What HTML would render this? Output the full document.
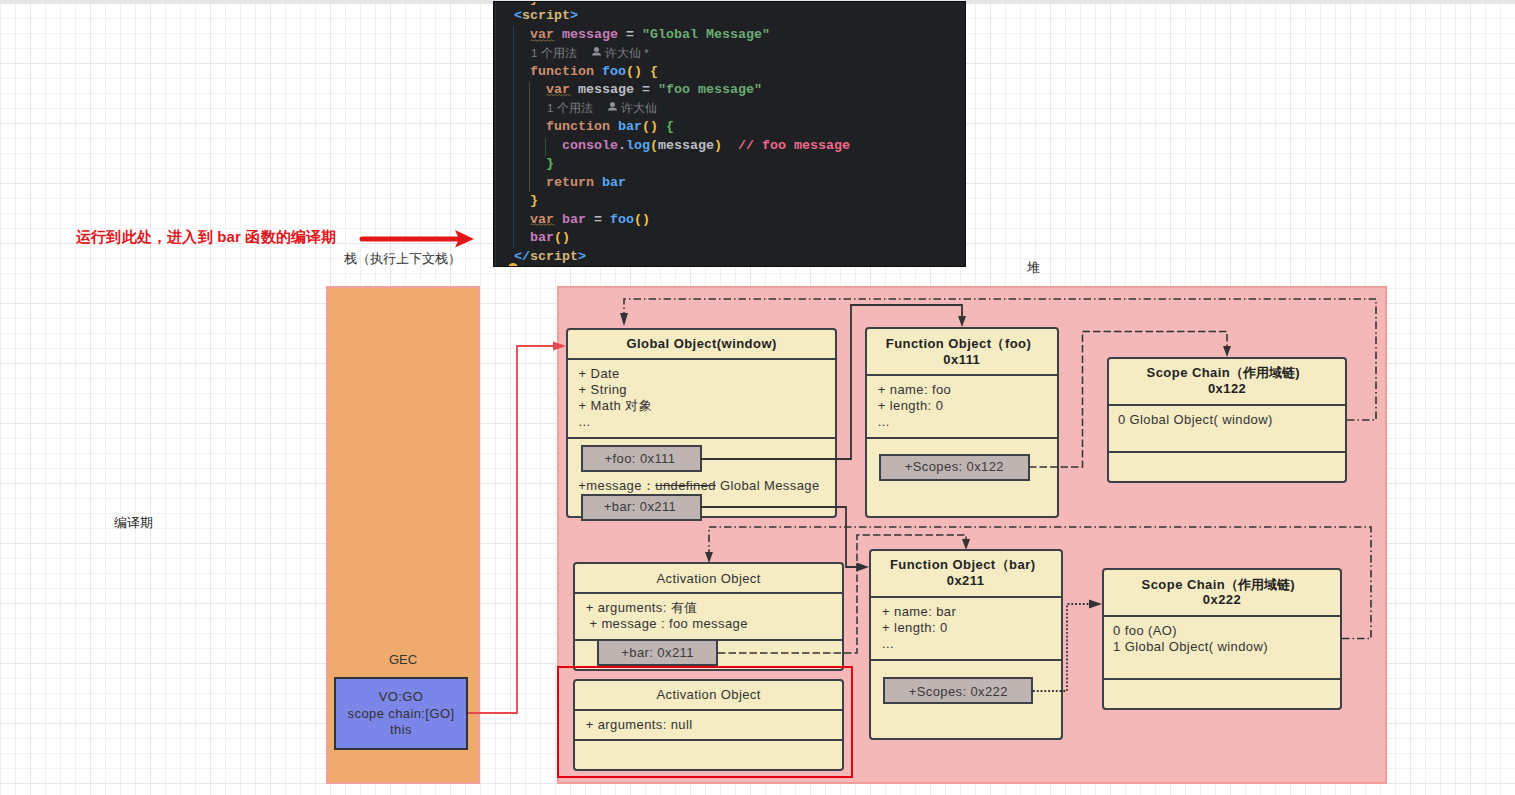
<!DOCTYPE html>
<html><head><meta charset="utf-8">
<style>
html,body{margin:0;padding:0;}
body{width:1515px;height:795px;overflow:hidden;position:relative;background:#fff;font-family:"Liberation Sans",sans-serif;color:#333;}
#grid{position:absolute;left:0;top:0;width:1515px;height:795px;
background-image:
linear-gradient(to right,#e6e6e6 1px,transparent 1px),
linear-gradient(to bottom,#e6e6e6 1px,transparent 1px),
linear-gradient(to right,#f1f1f1 1px,transparent 1px),
linear-gradient(to bottom,#f1f1f1 1px,transparent 1px);
background-size:60px 795px,1515px 60px,15px 795px,1515px 15px;
background-position:30px 0,0 63px,0 0,0 3px;}
#topband{position:absolute;left:0;top:0;width:1515px;height:3px;background:#e4e6e9;}
.abs{position:absolute;}
.t{position:absolute;white-space:nowrap;font-size:13px;line-height:16px;letter-spacing:0.4px;color:#333;}
.t.c{width:400px;text-align:center;}
.t.b{font-weight:bold;letter-spacing:0.45px;color:#222;}
.t.g{color:#3a3a3a;}
.box{position:absolute;box-sizing:border-box;background:#f6ecc4;border:2px solid #3d4046;border-radius:4px;}
.sep{position:absolute;height:2px;background:#3d4046;}
.gbox{position:absolute;box-sizing:border-box;background:#beb4b2;border:2px solid #3d4046;}
#code{position:absolute;left:493px;top:1px;width:473px;height:266px;background:#1f2023;box-sizing:border-box;border:1px solid #0c0d0f;overflow:hidden;font-family:"Liberation Mono",monospace;font-weight:bold;font-size:13.33px;}
#code .l{position:absolute;white-space:pre;line-height:18px;}
#code .m{position:absolute;white-space:pre;font-family:"Liberation Sans",sans-serif;font-weight:normal;font-size:11.5px;color:#7c8089;line-height:14px;}
.kw{color:#cf8e6d}.pu{color:#c77dbb}.bl{color:#56a8f5}.gr{color:#6aab73}.wh{color:#bcbec4}.ye{color:#f0c44c}.gn{color:#5fb85f}.tg{color:#d5b778}.cm{color:#f06a8a}
.sq{text-decoration:underline wavy #8d7440;text-decoration-thickness:1px;text-underline-offset:3px;}
</style></head><body>
<div id="grid"></div>
<div id="topband"></div>

<div id="code">
 <div class="abs" style="left:1px;top:0;width:1px;height:266px;background:#2b2d30"></div>
 <div class="abs" style="left:19px;top:24px;width:1px;height:222px;background:#23425a"></div>
 <div class="abs" style="left:35px;top:80px;width:1px;height:110px;background:#5a4d28"></div>
 <div class="abs" style="left:51px;top:136px;width:1px;height:18px;background:#2f5a2f"></div>
 <div class="l" style="left:36px;top:-12px;color:#dcae55">}</div>
 <div class="l" style="left:20px;top:5px"><span class="bl">&lt;</span><span class="tg">script</span><span class="bl">&gt;</span></div>
 <div class="l" style="left:36px;top:24px"><span class="kw">var</span> <span class="pu">message</span> <span class="wh">=</span> <span class="gr">"Global Message"</span></div>
 <div class="m" style="left:37px;top:44px">1 个用法</div>
 <div class="m" style="left:111px;top:44px">许大仙 *</div>
 <div class="l" style="left:36px;top:61px"><span class="kw">function</span> <span class="bl">foo</span><span class="ye">()</span> <span class="ye">{</span></div>
 <div class="l" style="left:52px;top:79px"><span class="kw">var</span> <span class="wh">message</span> <span class="wh">=</span> <span class="gr">"foo message"</span></div>
 <div class="m" style="left:53px;top:99px">1 个用法</div>
 <div class="m" style="left:127px;top:99px">许大仙</div>
 <div class="l" style="left:52px;top:116px"><span class="kw">function</span> <span class="bl">bar</span><span class="ye">()</span> <span class="gn">{</span></div>
 <div class="l" style="left:68px;top:135px"><span class="pu">console</span><span class="wh">.</span><span class="bl">log</span><span class="ye">(</span><span class="wh">message</span><span class="ye">)</span>  <span class="cm">// foo message</span></div>
 <div class="l" style="left:52px;top:153px"><span class="gn">}</span></div>
 <div class="l" style="left:52px;top:172px"><span class="kw">return</span> <span class="bl">bar</span></div>
 <div class="l" style="left:36px;top:190px"><span class="ye">}</span></div>
 <div class="l" style="left:36px;top:209px"><span class="kw">var</span> <span class="pu">bar</span> <span class="wh">=</span> <span class="bl">foo</span><span class="ye">()</span></div>
 <div class="l" style="left:36px;top:227px"><span class="pu">bar</span><span class="ye">()</span></div>
 <div class="l" style="left:20px;top:246px"><span class="bl">&lt;/</span><span class="tg">script</span><span class="bl">&gt;</span></div>
 <svg class="abs" style="left:0;top:0" width="473" height="266">
  <g fill="#8e9198"><circle cx="102.5" cy="47.5" r="2.5"/><path d="M98 53.5 Q98 50.5 102.5 50.5 Q107 50.5 107 53.5 Z"/>
  <circle cx="118.5" cy="102.5" r="2.5"/><path d="M114 108.5 Q114 105.5 118.5 105.5 Q123 105.5 123 108.5 Z"/></g>
  <g fill="none" stroke="#8f7a45" stroke-width="1">
   <path d="M36.5 38.5 q1 -1.2 2 0 q1 1.2 2 0 q1 -1.2 2 0 q1 1.2 2 0 q1 -1.2 2 0 q1 1.2 2 0 q1 -1.2 2 0 q1 1.2 2 0 q1 -1.2 2 0 q1 1.2 2 0 q1 -1.2 2 0 q1 1.2 2 0"/><path d="M52.5 93 q1 -1.2 2 0 q1 1.2 2 0 q1 -1.2 2 0 q1 1.2 2 0 q1 -1.2 2 0 q1 1.2 2 0 q1 -1.2 2 0 q1 1.2 2 0 q1 -1.2 2 0 q1 1.2 2 0 q1 -1.2 2 0 q1 1.2 2 0"/><path d="M36.5 222.5 q1 -1.2 2 0 q1 1.2 2 0 q1 -1.2 2 0 q1 1.2 2 0 q1 -1.2 2 0 q1 1.2 2 0 q1 -1.2 2 0 q1 1.2 2 0 q1 -1.2 2 0 q1 1.2 2 0 q1 -1.2 2 0 q1 1.2 2 0"/>
  </g>
 </svg>
 <div class="abs" style="left:14px;top:261px;width:10px;height:10px;border-radius:50%;background:#e8b545"></div>
</div>

<div class="t" style="left:76px;top:228px;font-size:15px;font-weight:bold;color:#e3161c;line-height:18px;letter-spacing:0.2px">运行到此处，进入到 bar 函数的编译期</div>
<div class="t" style="left:344px;top:251px;color:#333;font-size:13px;letter-spacing:0">栈（执行上下文栈）</div>
<div class="t" style="left:1026.5px;top:260px;color:#222">堆</div>
<div class="t" style="left:114px;top:515px;color:#222;letter-spacing:0">编译期</div>
<div class="abs" style="left:326px;top:286px;width:154px;height:498px;box-sizing:border-box;background:#eeab6d;border:2px solid #f0a19b;"></div>
<div class="abs" style="left:557px;top:286px;width:830px;height:498px;box-sizing:border-box;background:#f4b8b8;border:2px solid #f09d9b;"></div>
<div class="t c" style="left:203px;top:651.5px;letter-spacing:0">GEC</div>
<div class="abs" style="left:334px;top:677px;width:134px;height:73px;box-sizing:border-box;background:#7b86e8;border:2px solid #2f3237;"></div>
<div class="t c" style="left:201px;top:689.1px;">VO:GO</div>
<div class="t c" style="left:201px;top:705.7px;">scope chain:[GO]</div>
<div class="t c" style="left:201px;top:721.9px;">this</div>
<div class="box" style="left:566px;top:328px;width:271px;height:190px;"></div>
<div class="sep" style="left:566px;top:358px;width:271px"></div>
<div class="sep" style="left:566px;top:437px;width:271px"></div>
<div class="box" style="left:865px;top:327px;width:194px;height:191px;"></div>
<div class="sep" style="left:865px;top:374px;width:194px"></div>
<div class="sep" style="left:865px;top:437px;width:194px"></div>
<div class="box" style="left:1107px;top:357px;width:240px;height:126px;"></div>
<div class="sep" style="left:1107px;top:404px;width:240px"></div>
<div class="sep" style="left:1107px;top:451px;width:240px"></div>
<div class="box" style="left:573px;top:562px;width:271px;height:109px;"></div>
<div class="sep" style="left:573px;top:592px;width:271px"></div>
<div class="sep" style="left:573px;top:639px;width:271px"></div>
<div class="box" style="left:573px;top:679px;width:271px;height:92px;"></div>
<div class="sep" style="left:573px;top:709px;width:271px"></div>
<div class="sep" style="left:573px;top:739px;width:271px"></div>
<div class="box" style="left:869px;top:549px;width:194px;height:191px;"></div>
<div class="sep" style="left:869px;top:596px;width:194px"></div>
<div class="sep" style="left:869px;top:659px;width:194px"></div>
<div class="box" style="left:1102px;top:568px;width:240px;height:142px;"></div>
<div class="sep" style="left:1102px;top:615px;width:240px"></div>
<div class="sep" style="left:1102px;top:678px;width:240px"></div>
<div class="abs" style="left:557px;top:666px;width:296px;height:112px;box-sizing:border-box;border:2px solid #e5000f;"></div>
<div class="gbox" style="left:581px;top:445px;width:121px;height:27px"></div>
<div class="gbox" style="left:581px;top:494px;width:121px;height:27px"></div>
<div class="gbox" style="left:879px;top:454px;width:151px;height:27px"></div>
<div class="gbox" style="left:597px;top:639px;width:121px;height:27px"></div>
<div class="gbox" style="left:883px;top:677px;width:150px;height:27px"></div>
<div class="t b c" style="left:501.6px;top:336.4px;">Global Object(window)</div>
<div class="t" style="left:578.6px;top:365.9px;">+ Date</div>
<div class="t" style="left:578.6px;top:381.9px;">+ String</div>
<div class="t" style="left:578.6px;top:397.9px;">+ Math 对象</div>
<div class="t" style="left:578.6px;top:413.9px;">...</div>
<div class="t" style="left:578.3px;top:477.5px;">+message：<s>undefined</s> Global Message</div>
<div class="t g c" style="left:440px;top:450.8px;">+foo: 0x111</div>
<div class="t g c" style="left:440px;top:498.5px;">+bar: 0x211</div>
<div class="t b c" style="left:758.5px;top:336.1px;">Function Object（foo)</div>
<div class="t b c" style="left:761.8px;top:351.8px;">0x111</div>
<div class="t" style="left:877.8px;top:382.3px;">+ name: foo</div>
<div class="t" style="left:877.8px;top:398.2px;">+ length: 0</div>
<div class="t" style="left:877.8px;top:414.1px;">...</div>
<div class="t g c" style="left:754.4px;top:459.3px;">+Scopes: 0x122</div>
<div class="t b c" style="left:1023.3px;top:365.1px;">Scope Chain<span style="letter-spacing:0">（作用域链</span>)</div>
<div class="t b c" style="left:1027.1px;top:381.3px;">0x122</div>
<div class="t" style="left:1117.9px;top:412.4px;">0 Global Object( window)</div>
<div class="t c" style="left:508.6px;top:570.6px;">Activation Object</div>
<div class="t" style="left:585.7px;top:600.2px;">+ arguments: 有值</div>
<div class="t" style="left:589.4px;top:615.9px;">+ message : foo message</div>
<div class="t g c" style="left:457.6px;top:644.9px;">+bar: 0x211</div>
<div class="t c" style="left:508.6px;top:687.1px;">Activation Object</div>
<div class="t" style="left:585.7px;top:717.0px;">+ arguments: null</div>
<div class="t b c" style="left:762.7px;top:556.9px;">Function Object（bar)</div>
<div class="t b c" style="left:765.6px;top:572.7px;">0x211</div>
<div class="t" style="left:882.1px;top:604.2px;">+ name: bar</div>
<div class="t" style="left:882.1px;top:620.1px;">+ length: 0</div>
<div class="t" style="left:882.1px;top:636.0px;">...</div>
<div class="t g c" style="left:758.3px;top:683.5px;">+Scopes: 0x222</div>
<div class="t b c" style="left:1018.3px;top:576.5px;">Scope Chain<span style="letter-spacing:0">（作用域链</span>)</div>
<div class="t b c" style="left:1022px;top:592.1px;">0x222</div>
<div class="t" style="left:1113.1px;top:623.3px;">0 foo (AO)</div>
<div class="t" style="left:1113.1px;top:639.3px;">1 Global Object( window)</div>
<svg class="abs" style="left:0;top:0" width="1515" height="795" viewBox="0 0 1515 795">
 <g fill="none" stroke="#333" stroke-width="1.8">
  <path d="M701 459 H851 V305 H962 V316"/>
  <path d="M701 507 H846 V567 H858"/>
  <path d="M1029 467 H1082.5 V331.5 H1227 V346" stroke-dasharray="7.5 3" stroke-width="1.5"/>
  <path d="M1347 420 H1376 V299 H624 V313" stroke-dasharray="7.5 3 1.5 3" stroke-width="1.6"/>
  <path d="M1342 638.5 H1371 V527 H709 V552" stroke-dasharray="7.5 3 1.5 3" stroke-width="1.6"/>
  <path d="M718 653 H857 V535 H966 V539" stroke-dasharray="7.5 3" stroke-width="1.5"/>
  <path d="M1033 691 H1067 V604 H1090" stroke-dasharray="1.8 2"/>
 </g>
 <g fill="#333">
  <path d="M958 316 L966 316 L962 327 Z"/>
  <path d="M856.5 562.5 L869 567 L856.5 571.5 Z"/>
  <path d="M1223 346 L1231 346 L1227 357 Z"/>
  <path d="M620 313 L628 313 L624 326 Z"/>
  <path d="M705 552 L713 552 L709 563 Z"/>
  <path d="M962 539 L970 539 L966 550 Z"/>
  <path d="M1089 599.5 L1102 604 L1089 608.5 Z"/>
 </g>
 <path d="M468 713 H517 V346 H555" fill="none" stroke="#e5484d" stroke-width="1.8"/>
 <path d="M553 341.5 L566 346 L553 350.5 Z" fill="#e5484d"/>
 <path d="M362 239 H458" fill="none" stroke="#e3161c" stroke-width="5" stroke-linecap="round"/>
 <path d="M455 230 L474 239 L455 247.5 L459 239 Z" fill="#e3161c"/>
</svg>
</body></html>
